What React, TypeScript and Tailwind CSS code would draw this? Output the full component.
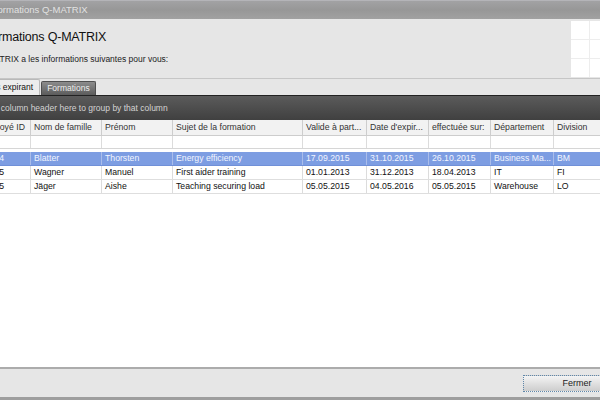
import React from "react"

const font = { fontFamily: '"Liberation Sans", Arial, sans-serif' }

const cols = [
  { label: "Employé ID", w: "w-[54px]" },
  { label: "Nom de famille", w: "w-[71px]" },
  { label: "Prénom", w: "w-[71px]" },
  { label: "Sujet de la formation", w: "w-[130px]" },
  { label: "Valide à part...", w: "w-[64px]" },
  { label: "Date d'expir...", w: "w-[62px]" },
  { label: "effectuée sur:", w: "w-[62px]" },
  { label: "Département", w: "w-[63px]" },
  { label: "Division", w: "w-[80px]" },
]

const rows = [
  ["10004", "Blatter", "Thorsten", "Energy efficiency", "17.09.2015", "31.10.2015", "26.10.2015", "Business Ma...", "BM"],
  ["10005", "Wagner", "Manuel", "First aider training", "01.01.2013", "31.12.2013", "18.04.2013", "IT", "FI"],
  ["10015", "Jäger", "Aishe", "Teaching securing load", "05.05.2015", "04.05.2016", "05.05.2015", "Warehouse", "LO"],
]

export default function App() {
  return (
    <div className="flex h-[400px] w-[600px] flex-col overflow-hidden bg-white text-[#222]" style={font}>
      {/* Title bar */}
      <div className="flex h-[19px] shrink-0 items-center border-t border-[#b4b4b8] bg-gradient-to-b from-[#a2a2a4] via-[#979797] to-[#a1a1a1] text-[9.5px] text-[#e2e2e2]">
        <span className="ml-[-13px] whitespace-nowrap">Informations Q-MATRIX</span>
      </div>

      {/* Header panel */}
      <div className="flex h-[60px] shrink-0 border-b border-[#c6c6c6] bg-[#e6e6e6]">
        <div className="flex-1 pt-[10px]">
          <div className="ml-[-22px] whitespace-nowrap text-[12.5px] leading-[17px] tracking-[-0.2px] text-[#111]">
            Informations Q-MATRIX
          </div>
          <div className="mt-[7px] ml-[-22px] whitespace-nowrap text-[8.5px] text-[#222]">
            Q-MATRIX a les informations suivantes pour vous:
          </div>
        </div>
        <div className="mr-[-27px] mt-[2px] grid shrink-0 grid-cols-3 gap-[1px] self-start bg-[#ededed]">
          {Array.from({ length: 9 }).map((_, i) => (
            <div key={i} className="h-[18px] w-[18px] bg-white" />
          ))}
        </div>
      </div>

      {/* Tabs */}
      <div className="flex h-[16px] shrink-0 items-end bg-[#e6e6e6]">
        <div className="ml-[-49px] flex h-[16px] items-center whitespace-nowrap rounded-t-[2px] border border-b-0 border-[#b9b9b9] bg-[#ededed] px-[6px] text-[8.5px] text-[#111]">
          Formations expirant
        </div>
        <div className="ml-[1px] flex h-[14px] items-center whitespace-nowrap rounded-t-[2px] border border-b-0 border-[#4f4f4f] bg-gradient-to-b from-[#8c8c8c] to-[#5c5c5c] px-[5px] text-[8.5px] text-[#eeeeee]">
          Formations
        </div>
      </div>

      {/* Group panel */}
      <div className="flex h-[25px] shrink-0 items-center border-t border-[#222] bg-gradient-to-b from-[#5b5b5b] to-[#404040] text-[8.5px] text-[#d4d4d4]">
        <span className="ml-[-27px] whitespace-nowrap">Drag a column header here to group by that column</span>
      </div>

      {/* Grid */}
      <div className="flex-1 bg-white">
        <div className="ml-[-23px] flex h-[16px] border-b border-[#cdcdcd] bg-[#f2f2f2]">
          {cols.map((c) => (
            <div
              key={c.label}
              className={`${c.w} shrink-0 overflow-hidden whitespace-nowrap border-r border-[#cdcdcd] pl-[3px] text-[8.7px] leading-[15px] text-[#333]`}
            >
              {c.label}
            </div>
          ))}
        </div>
        <div className="ml-[-23px] flex h-[13px] border-b border-[#d6d6d6]">
          {cols.map((c) => (
            <div key={c.label} className={`${c.w} shrink-0 border-r border-[#dcdcdc]`} />
          ))}
        </div>
        <div className="h-[3px]" />
        {rows.map((r, i) => (
          <div
            key={i}
            className={`ml-[-23px] flex h-[14px] border-b ${
              i === 0 ? "border-[#7090d8] bg-[#7d9de2] text-[#f2f5ff]" : "border-[#dedede] text-[#111]"
            }`}
          >
            {r.map((v, j) => (
              <div
                key={j}
                className={`${cols[j].w} shrink-0 overflow-hidden whitespace-nowrap border-r ${
                  i === 0 ? "border-[#aabdea]" : "border-[#dcdcdc]"
                } pl-[3px] text-[8.7px] leading-[13px]`}
              >
                {v}
              </div>
            ))}
          </div>
        ))}
      </div>

      {/* Footer */}
      <div className="flex h-[30px] shrink-0 items-start border-t-2 border-[#acacac] bg-[#e6e6e6] pt-[6px]">
        <div className="ml-auto mr-[-31px] flex h-[17px] w-[108px] items-center justify-center border border-dotted border-[#5f87aa] bg-gradient-to-b from-[#f4f4f4] to-[#cdcdcd] text-[9px] text-[#222]">
          Fermer
        </div>
      </div>
      <div className="h-[3px] shrink-0 bg-[#9e9e9e]" />
    </div>
  )
}
